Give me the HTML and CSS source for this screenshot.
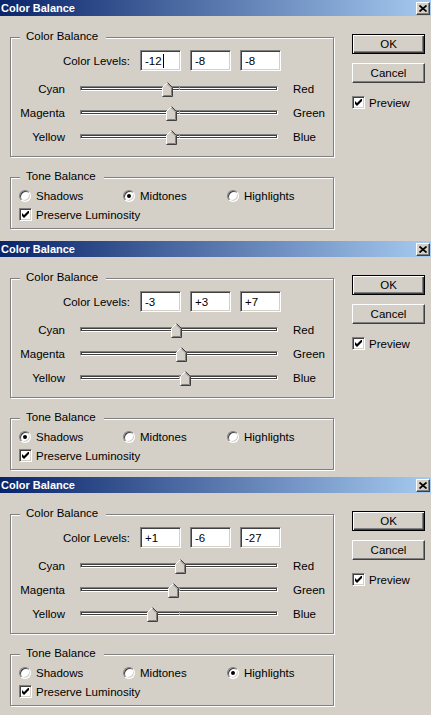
FILE: index.html
```html
<!DOCTYPE html>
<html lang="en">
<head>
    <meta charset="UTF-8">
    <meta name="viewport" content="width=device-width, initial-scale=1.0">
    <title>Color Balance</title>
    <link rel="stylesheet" href="styles.css">
</head>
<body>
    <!-- Dialog 1: midtones -->
    <section class="dialog dialog-first">
        <header class="titlebar">
            <span class="title">Color Balance</span>
            <span class="close-btn"><svg width="8" height="7" viewBox="0 0 8 7"><path d="M0.5 0.5L7.5 6.5M7.5 0.5L0.5 6.5" stroke="#000" stroke-width="1.7"/></svg></span>
        </header>
        <div class="dialog-body">
            <div class="main-col">
                <div class="group group-color">
                    <span class="group-label">Color Balance</span>
                    <div class="levels-row">
                        <span class="levels-label">Color Levels:</span>
                        <span class="field">-12<i class="caret"></i></span>
                        <span class="field">-8</span>
                        <span class="field">-8</span>
                    </div>
                    <div class="slider-row">
                        <span class="slider-left">Cyan</span>
                        <div class="slider"><div class="track"></div><svg class="thumb" style="left: 82px" width="11" height="15" viewBox="0 0 11 15"><use href="#thumb"/></svg></div>
                        <span class="slider-right">Red</span>
                    </div>
                    <div class="slider-row">
                        <span class="slider-left">Magenta</span>
                        <div class="slider"><div class="track"></div><svg class="thumb" style="left: 86px" width="11" height="15" viewBox="0 0 11 15"><use href="#thumb"/></svg></div>
                        <span class="slider-right">Green</span>
                    </div>
                    <div class="slider-row">
                        <span class="slider-left">Yellow</span>
                        <div class="slider"><div class="track"></div><svg class="thumb" style="left: 86px" width="11" height="15" viewBox="0 0 11 15"><use href="#thumb"/></svg></div>
                        <span class="slider-right">Blue</span>
                    </div>
                </div>
                <div class="group group-tone">
                    <span class="group-label">Tone Balance</span>
                    <div class="radio-row">
                        <span class="radio"><span class="radio-dot"></span>Shadows</span>
                        <span class="radio"><span class="radio-dot checked"></span>Midtones</span>
                        <span class="radio"><span class="radio-dot"></span>Highlights</span>
                    </div>
                    <span class="check check-lum"><span class="check-box"><svg width="7" height="7" viewBox="0 0 7 7"><use href="#tick"/></svg></span>Preserve Luminosity</span>
                </div>
            </div>
            <div class="side-col">
                <span class="btn btn-default">OK</span>
                <span class="btn btn-cancel">Cancel</span>
                <span class="check check-preview"><span class="check-box"><svg width="7" height="7" viewBox="0 0 7 7"><use href="#tick"/></svg></span>Preview</span>
            </div>
        </div>
    </section>

    <!-- Dialog 2: shadows -->
    <section class="dialog dialog-second">
        <header class="titlebar">
            <span class="title">Color Balance</span>
            <span class="close-btn"><svg width="8" height="7" viewBox="0 0 8 7"><path d="M0.5 0.5L7.5 6.5M7.5 0.5L0.5 6.5" stroke="#000" stroke-width="1.7"/></svg></span>
        </header>
        <div class="dialog-body">
            <div class="main-col">
                <div class="group group-color">
                    <span class="group-label">Color Balance</span>
                    <div class="levels-row">
                        <span class="levels-label">Color Levels:</span>
                        <span class="field">-3</span>
                        <span class="field">+3</span>
                        <span class="field">+7</span>
                    </div>
                    <div class="slider-row">
                        <span class="slider-left">Cyan</span>
                        <div class="slider"><div class="track"></div><svg class="thumb" style="left: 91px" width="11" height="15" viewBox="0 0 11 15"><use href="#thumb"/></svg></div>
                        <span class="slider-right">Red</span>
                    </div>
                    <div class="slider-row">
                        <span class="slider-left">Magenta</span>
                        <div class="slider"><div class="track"></div><svg class="thumb" style="left: 96px" width="11" height="15" viewBox="0 0 11 15"><use href="#thumb"/></svg></div>
                        <span class="slider-right">Green</span>
                    </div>
                    <div class="slider-row">
                        <span class="slider-left">Yellow</span>
                        <div class="slider"><div class="track"></div><svg class="thumb" style="left: 100px" width="11" height="15" viewBox="0 0 11 15"><use href="#thumb"/></svg></div>
                        <span class="slider-right">Blue</span>
                    </div>
                </div>
                <div class="group group-tone">
                    <span class="group-label">Tone Balance</span>
                    <div class="radio-row">
                        <span class="radio"><span class="radio-dot checked"></span>Shadows</span>
                        <span class="radio"><span class="radio-dot"></span>Midtones</span>
                        <span class="radio"><span class="radio-dot"></span>Highlights</span>
                    </div>
                    <span class="check check-lum"><span class="check-box"><svg width="7" height="7" viewBox="0 0 7 7"><use href="#tick"/></svg></span>Preserve Luminosity</span>
                </div>
            </div>
            <div class="side-col">
                <span class="btn btn-default">OK</span>
                <span class="btn btn-cancel">Cancel</span>
                <span class="check check-preview"><span class="check-box"><svg width="7" height="7" viewBox="0 0 7 7"><use href="#tick"/></svg></span>Preview</span>
            </div>
        </div>
    </section>

    <!-- Dialog 3: highlights -->
    <section class="dialog dialog-third">
        <header class="titlebar">
            <span class="title">Color Balance</span>
            <span class="close-btn"><svg width="8" height="7" viewBox="0 0 8 7"><path d="M0.5 0.5L7.5 6.5M7.5 0.5L0.5 6.5" stroke="#000" stroke-width="1.7"/></svg></span>
        </header>
        <div class="dialog-body">
            <div class="main-col">
                <div class="group group-color">
                    <span class="group-label">Color Balance</span>
                    <div class="levels-row">
                        <span class="levels-label">Color Levels:</span>
                        <span class="field">+1</span>
                        <span class="field">-6</span>
                        <span class="field">-27</span>
                    </div>
                    <div class="slider-row">
                        <span class="slider-left">Cyan</span>
                        <div class="slider"><div class="track"></div><svg class="thumb" style="left: 95px" width="11" height="15" viewBox="0 0 11 15"><use href="#thumb"/></svg></div>
                        <span class="slider-right">Red</span>
                    </div>
                    <div class="slider-row">
                        <span class="slider-left">Magenta</span>
                        <div class="slider"><div class="track"></div><svg class="thumb" style="left: 88px" width="11" height="15" viewBox="0 0 11 15"><use href="#thumb"/></svg></div>
                        <span class="slider-right">Green</span>
                    </div>
                    <div class="slider-row">
                        <span class="slider-left">Yellow</span>
                        <div class="slider"><div class="track"></div><svg class="thumb" style="left: 67px" width="11" height="15" viewBox="0 0 11 15"><use href="#thumb"/></svg></div>
                        <span class="slider-right">Blue</span>
                    </div>
                </div>
                <div class="group group-tone">
                    <span class="group-label">Tone Balance</span>
                    <div class="radio-row">
                        <span class="radio"><span class="radio-dot"></span>Shadows</span>
                        <span class="radio"><span class="radio-dot"></span>Midtones</span>
                        <span class="radio"><span class="radio-dot checked"></span>Highlights</span>
                    </div>
                    <span class="check check-lum"><span class="check-box"><svg width="7" height="7" viewBox="0 0 7 7"><use href="#tick"/></svg></span>Preserve Luminosity</span>
                </div>
            </div>
            <div class="side-col">
                <span class="btn btn-default">OK</span>
                <span class="btn btn-cancel">Cancel</span>
                <span class="check check-preview"><span class="check-box"><svg width="7" height="7" viewBox="0 0 7 7"><use href="#tick"/></svg></span>Preview</span>
            </div>
        </div>
    </section>

    <!-- shared shapes: slider thumb and check tick -->
    <svg class="defs" width="0" height="0">
        <defs>
            <g id="thumb">
                <path d="M0.5 14.5V5.5L5.5 0.5L10.5 5.5V14.5Z" fill="#d4d0c8"/>
                <path d="M0.5 14V5.5L5.5 0.5" fill="none" stroke="#fff"/>
                <path d="M5.5 0.5L10.5 5.5V14.5H0.5" fill="none" stroke="#404040"/>
                <path d="M5.5 1.9L9.5 5.9V13.5H1.5" fill="none" stroke="#808080"/>
            </g>
            <path id="tick" d="M0 2L2 4L7 -1V2L2 7L0 5Z" fill="#000"/>
        </defs>
    </svg>
</body>
</html>
```

FILE: styles.css
```css
* {
    margin: 0;
    padding: 0;
    box-sizing: border-box;
}

body {
    width: 431px;
    background-color: #d4d0c8;
    font-family: "Liberation Sans", Arial, sans-serif;
    font-size: 11.5px;
    color: #000;
}

.dialog {
    overflow: hidden;
}

.dialog-first {
    height: 241px;
}

.dialog-second {
    height: 236px;
}

.dialog-third {
    height: 238px;
}

/* caption */
.titlebar {
    height: 16px;
    display: flex;
    align-items: center;
    justify-content: space-between;
    padding: 0 1px 0 1px;
    background: linear-gradient(to right, #0a246a, #a6caf0);
}

.title {
    color: #fff;
    font-size: 11px;
    font-weight: bold;
    line-height: 16px;
}

.close-btn {
    width: 14px;
    height: 13px;
    display: flex;
    align-items: center;
    justify-content: center;
    background-color: #d4d0c8;
    border: 1px solid;
    border-color: #fff #404040 #404040 #fff;
    box-shadow: inset -1px -1px 0 #808080;
}

.dialog-body {
    display: flex;
    align-items: flex-start;
    padding-left: 10px;
}

.main-col {
    width: 324px;
    margin-top: 21px;
}

.side-col {
    width: 73px;
    margin-left: 18px;
    margin-top: 18px;
    display: flex;
    flex-direction: column;
}

/* etched group boxes */
.group {
    position: relative;
    border: 1px solid #808080;
    box-shadow: inset 1px 1px 0 #fff, 1px 1px 0 #fff;
}

.group-label {
    position: absolute;
    top: -8px;
    left: 9px;
    line-height: 13px;
    padding: 0 8px 0 6px;
    background-color: #d4d0c8;
}

.group-color {
    height: 120px;
    padding-top: 12px;
}

.group-tone {
    height: 52px;
    margin-top: 20px;
    padding: 11px 0 0 8px;
}

/* level fields */
.levels-row {
    display: flex;
    align-items: center;
    height: 21px;
}

.levels-label {
    width: 119px;
    margin-right: 10px;
    text-align: right;
}

.field {
    width: 41px;
    height: 21px;
    margin-right: 9px;
    padding-left: 4px;
    display: flex;
    align-items: center;
    background-color: #fff;
    border: 1px solid;
    border-color: #808080 #fff #fff #808080;
    box-shadow: inset 1px 1px 0 #404040, inset -1px -1px 0 #d4d0c8;
}

.caret {
    display: inline-block;
    width: 1px;
    height: 14px;
    margin-left: 1px;
    background-color: #000;
}

/* sliders */
.slider-row {
    display: flex;
    align-items: center;
    height: 24px;
}

.levels-row + .slider-row {
    margin-top: 6px;
}

.slider-left {
    width: 54px;
    text-align: right;
}

.slider {
    position: relative;
    width: 198px;
    height: 15px;
    margin-left: 15px;
}

.track {
    position: absolute;
    left: 0;
    right: 0;
    top: 4px;
    height: 5px;
    background-color: #fff;
    border: 1px solid;
    border-color: #808080 #fff #fff #808080;
    box-shadow: inset 0 0 0 1px #404040;
}

.track::after {
    content: "";
    position: absolute;
    left: 98px;
    top: 0;
    width: 1px;
    height: 3px;
    background-color: #b0aca4;
}

.thumb {
    position: absolute;
    top: 0;
}

.slider-right {
    margin-left: 15px;
}

/* radios and checkboxes */
.radio-row {
    display: flex;
    align-items: center;
    height: 13px;
}

.radio {
    width: 104px;
    display: flex;
    align-items: center;
    gap: 5px;
}

.radio-dot {
    position: relative;
    width: 12px;
    height: 12px;
    border-radius: 50%;
    background-color: #fff;
    border: 1px solid;
    border-color: #808080 #fff #fff #808080;
    box-shadow: inset 1px 1px 0 #404040, inset -1px -1px 0 #d4d0c8;
}

.radio-dot.checked::after {
    content: "";
    position: absolute;
    left: 3px;
    top: 3px;
    width: 4px;
    height: 4px;
    border-radius: 50%;
    background-color: #000;
}

.check {
    display: flex;
    align-items: center;
    gap: 4px;
    height: 13px;
}

.check-lum {
    margin-top: 6px;
}

.check-box {
    width: 13px;
    height: 13px;
    display: flex;
    align-items: center;
    justify-content: center;
    background-color: #fff;
    border: 1px solid;
    border-color: #808080 #fff #fff #808080;
    box-shadow: inset 1px 1px 0 #404040, inset -1px -1px 0 #d4d0c8;
}

/* buttons */
.btn {
    height: 20px;
    display: flex;
    align-items: center;
    justify-content: center;
    background-color: #d4d0c8;
    border: 1px solid;
    border-color: #fff #404040 #404040 #fff;
    box-shadow: inset -1px -1px 0 #808080;
}

.btn-default {
    border-color: #000;
    box-shadow: inset 1px 1px 0 #fff, inset -1px -1px 0 #404040, inset -2px -2px 0 #808080;
}

.btn-cancel {
    margin-top: 9px;
}

.check-preview {
    margin-top: 13px;
}

.defs {
    position: absolute;
}
```
